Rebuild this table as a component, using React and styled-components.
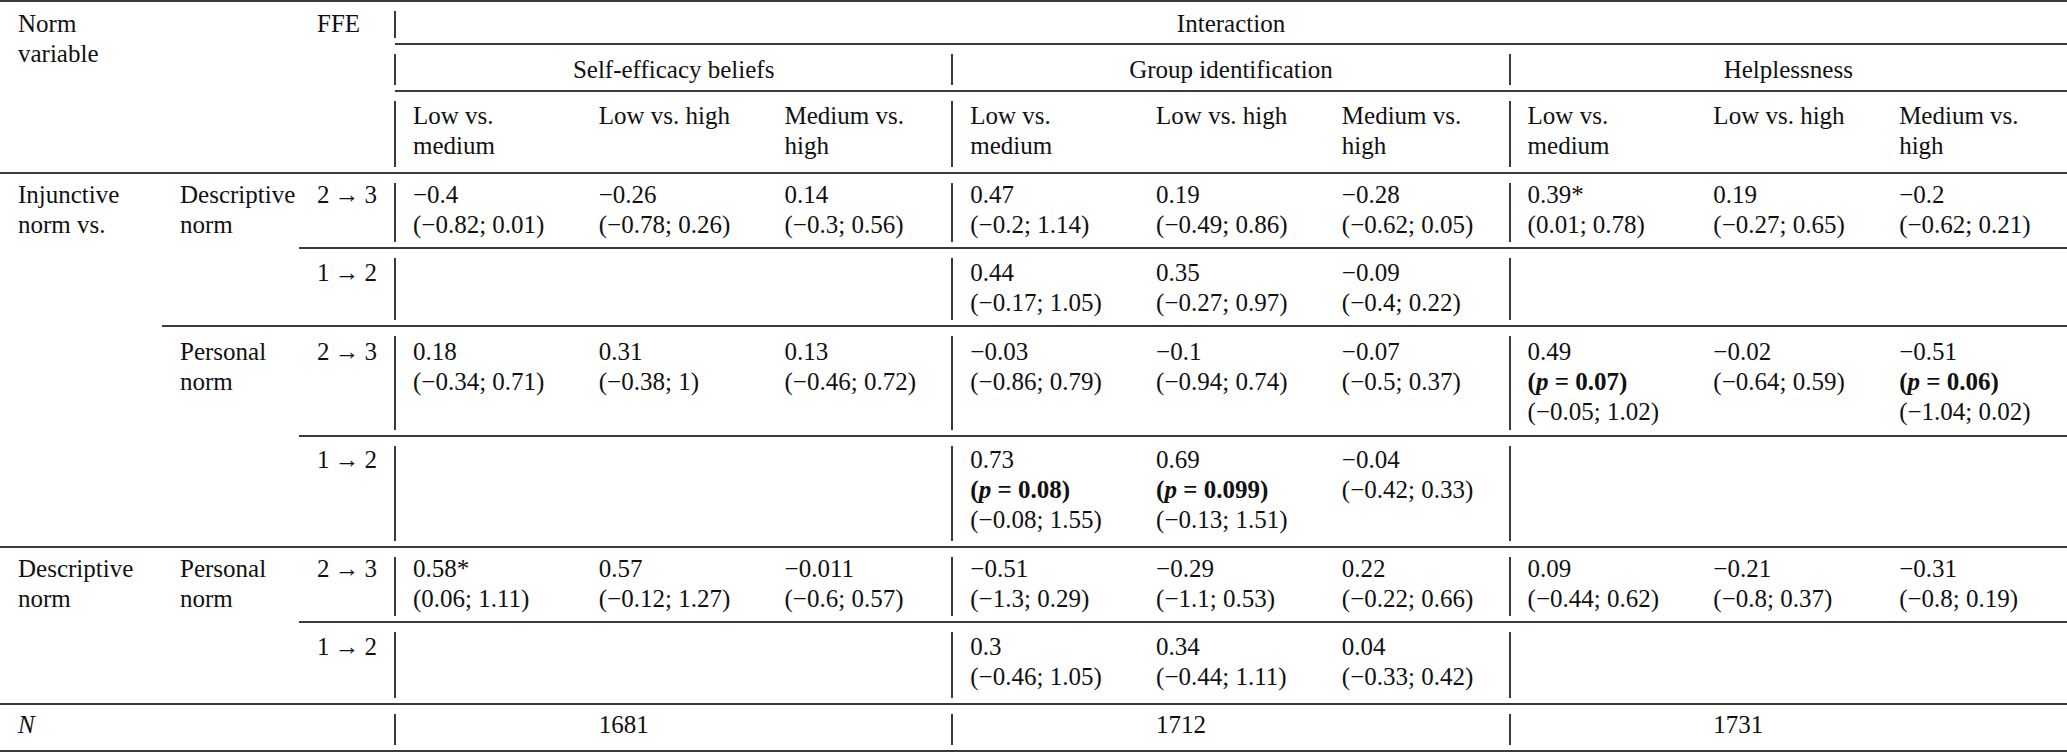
import React from "react";
import styled, { createGlobalStyle, css } from "styled-components";

const SERIF = `"Liberation Serif", "Times New Roman", Tinos, "DejaVu Serif", serif`;

const Global = createGlobalStyle`
  html, body { margin: 0; padding: 0; background: #ffffff; }
  body { font-family: ${SERIF}; color: #111111; }
`;

const Table = styled.table`
  width: 2067px;
  table-layout: fixed;
  border-collapse: separate;
  border-spacing: 0;
  border-top: 2px solid #3a3a3a;
  font-family: ${SERIF};
  font-size: 25px;
  line-height: 30px;
  color: #111111;
`;

const Col = styled.col`
  width: ${(p) => (p.$w ? `${p.$w}px` : "auto")};
`;

const Row = styled.tr`
  height: ${(p) => p.$h}px;
  & > td {
    padding-top: ${(p) => p.$pt}px;
  }
`;

const Cell = styled.td`
  position: relative;
  vertical-align: top;
  padding: 0 0 0 ${(p) => (p.$center ? 0 : 18)}px;
  border-bottom: 2px solid #3a3a3a;
  text-align: ${(p) => (p.$center ? "center" : "left")};
  white-space: nowrap;
  font-family: ${SERIF};
  ${(p) =>
    p.$rule &&
    css`
      &::before {
        content: "";
        position: absolute;
        left: -1px;
        top: 9px;
        bottom: 5px;
        width: 2px;
        background: #3a3a3a;
      }
    `}
`;

const Line = styled.div`
  display: block;
`;

const Sig = styled.div`
  font-weight: bold;
  & i {
    font-style: italic;
  }
`;

const Italic = styled.span`
  font-style: italic;
`;

const ARROW_23 = "2\u2009\u2192\u20093";
const ARROW_12 = "1\u2009\u2192\u20092";

const v = (est, ci, p) => ({ est, ci, p });

const rows = [
  {
    h: 75,
    pt: 6,
    lead: [
      { key: "a", rowSpan: 4, lines: ["Injunctive", "norm vs."] },
      { key: "b", rowSpan: 2, lines: ["Descriptive", "norm"] },
    ],
    ffe: ARROW_23,
    data: [
      v("−0.4", "(−0.82; 0.01)"),
      v("−0.26", "(−0.78; 0.26)"),
      v("0.14", "(−0.3; 0.56)"),
      v("0.47", "(−0.2; 1.14)"),
      v("0.19", "(−0.49; 0.86)"),
      v("−0.28", "(−0.62; 0.05)"),
      v("0.39*", "(0.01; 0.78)"),
      v("0.19", "(−0.27; 0.65)"),
      v("−0.2", "(−0.62; 0.21)"),
    ],
  },
  {
    h: 78,
    pt: 9,
    lead: [],
    ffe: ARROW_12,
    data: [
      null,
      null,
      null,
      v("0.44", "(−0.17; 1.05)"),
      v("0.35", "(−0.27; 0.97)"),
      v("−0.09", "(−0.4; 0.22)"),
      null,
      null,
      null,
    ],
  },
  {
    h: 110,
    pt: 10,
    lead: [{ key: "b", rowSpan: 2, lines: ["Personal", "norm"] }],
    ffe: ARROW_23,
    data: [
      v("0.18", "(−0.34; 0.71)"),
      v("0.31", "(−0.38; 1)"),
      v("0.13", "(−0.46; 0.72)"),
      v("−0.03", "(−0.86; 0.79)"),
      v("−0.1", "(−0.94; 0.74)"),
      v("−0.07", "(−0.5; 0.37)"),
      v("0.49", "(−0.05; 1.02)", "0.07"),
      v("−0.02", "(−0.64; 0.59)"),
      v("−0.51", "(−1.04; 0.02)", "0.06"),
    ],
  },
  {
    h: 111,
    pt: 8,
    lead: [],
    ffe: ARROW_12,
    data: [
      null,
      null,
      null,
      v("0.73", "(−0.08; 1.55)", "0.08"),
      v("0.69", "(−0.13; 1.51)", "0.099"),
      v("−0.04", "(−0.42; 0.33)"),
      null,
      null,
      null,
    ],
  },
  {
    h: 75,
    pt: 6,
    lead: [
      { key: "a", rowSpan: 2, lines: ["Descriptive", "norm"] },
      { key: "b", rowSpan: 2, lines: ["Personal", "norm"] },
    ],
    ffe: ARROW_23,
    data: [
      v("0.58*", "(0.06; 1.11)"),
      v("0.57", "(−0.12; 1.27)"),
      v("−0.011", "(−0.6; 0.57)"),
      v("−0.51", "(−1.3; 0.29)"),
      v("−0.29", "(−1.1; 0.53)"),
      v("0.22", "(−0.22; 0.66)"),
      v("0.09", "(−0.44; 0.62)"),
      v("−0.21", "(−0.8; 0.37)"),
      v("−0.31", "(−0.8; 0.19)"),
    ],
  },
  {
    h: 82,
    pt: 9,
    lead: [],
    ffe: ARROW_12,
    data: [
      null,
      null,
      null,
      v("0.3", "(−0.46; 1.05)"),
      v("0.34", "(−0.44; 1.11)"),
      v("0.04", "(−0.33; 0.42)"),
      null,
      null,
      null,
    ],
  },
];

const groups = ["Self-efficacy beliefs", "Group identification", "Helplessness"];
const contrasts = [
  ["Low vs.", "medium"],
  ["Low vs. high"],
  ["Medium vs.", "high"],
];

function Lines({ lines }) {
  return lines.map((l, i) => <Line key={i}>{l}</Line>);
}

function DataCell({ d, rule }) {
  return (
    <Cell $rule={rule}>
      {d && (
        <>
          <Line>{d.est}</Line>
          {d.p && (
            <Sig>
              (<i>p</i> = {d.p})
            </Sig>
          )}
          <Line>{d.ci}</Line>
        </>
      )}
    </Cell>
  );
}

export default function App() {
  return (
    <>
      <Global />
      <Table>
        <colgroup>
          <Col $w={162} />
          <Col $w={137} />
          <Col $w={96} />
          {Array.from({ length: 9 }).map((_, i) => (
            <Col key={i} />
          ))}
        </colgroup>
        <tbody>
          <Row $h={43} $pt={7}>
            <Cell rowSpan={3}>
              <Lines lines={["Norm", "variable"]} />
            </Cell>
            <Cell rowSpan={3} />
            <Cell rowSpan={3}>FFE</Cell>
            <Cell colSpan={9} $center $rule>
              Interaction
            </Cell>
          </Row>
          <Row $h={47} $pt={10}>
            {groups.map((g) => (
              <Cell key={g} colSpan={3} $center $rule>
                {g}
              </Cell>
            ))}
          </Row>
          <Row $h={82} $pt={9}>
            {groups.map((g) =>
              contrasts.map((c, i) => (
                <Cell key={g + i} $rule={i === 0}>
                  <Lines lines={c} />
                </Cell>
              ))
            )}
          </Row>
          {rows.map((r, ri) => (
            <Row key={ri} $h={r.h} $pt={r.pt}>
              {r.lead.map((l) => (
                <Cell key={l.key} rowSpan={l.rowSpan}>
                  <Lines lines={l.lines} />
                </Cell>
              ))}
              <Cell>{r.ffe}</Cell>
              {r.data.map((d, i) => (
                <DataCell key={i} d={d} rule={i % 3 === 0} />
              ))}
            </Row>
          ))}
          <Row $h={47} $pt={5}>
            <Cell>
              <Italic>N</Italic>
            </Cell>
            <Cell />
            <Cell />
            {["1681", "1712", "1731"].map((n) => (
              <React.Fragment key={n}>
                <Cell $rule />
                <Cell>{n}</Cell>
                <Cell />
              </React.Fragment>
            ))}
          </Row>
        </tbody>
      </Table>
    </>
  );
}
